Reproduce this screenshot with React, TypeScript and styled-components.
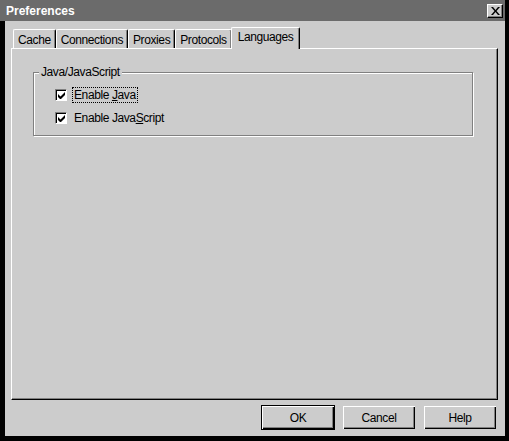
import React from 'react'
import styled, { createGlobalStyle } from 'styled-components'

const Global = createGlobalStyle`
  html, body { margin: 0; padding: 0; background: #000; }
  body { font-family: "Liberation Sans", Arial, sans-serif; font-size: 12px; letter-spacing: -0.4px; }
`

const tabs = ['Cache', 'Connections', 'Proxies', 'Protocols', 'Languages']

export default function App() {
  return (
    <>
      <Global />
      <Window>
        <TitleBar>
          <Title>Preferences</Title>
          <CloseButton>
            <svg width="9" height="8" viewBox="0 0 9 8">
              <path d="M0 0h2l2.5 3 2.5-3h2L5.5 4 9 8H7L4.5 5 2 8H0l3.5-4z" fill="#000" />
            </svg>
          </CloseButton>
        </TitleBar>
        <Body>
          <TabRow>
            {tabs.map((t) => (
              <Tab key={t} $active={t === 'Languages'}>
                {t}
              </Tab>
            ))}
          </TabRow>
          <Panel>
            <GroupBox>
              <Legend>Java/JavaScript</Legend>
              <CheckRow>
                <CheckBox>
                  <Check />
                </CheckBox>
                <Label $focused>
                  Enable <u>J</u>ava
                </Label>
              </CheckRow>
              <CheckRow>
                <CheckBox>
                  <Check />
                </CheckBox>
                <Label>
                  Enable Java<u>S</u>cript
                </Label>
              </CheckRow>
            </GroupBox>
          </Panel>
          <ButtonBar>
            <Button $default>OK</Button>
            <Button>Cancel</Button>
            <Button>Help</Button>
          </ButtonBar>
        </Body>
      </Window>
    </>
  )
}

const Check = () => (
  <svg width="7" height="7" viewBox="0 0 7 7">
    <path d="M0 2v3l2 2h1l4-4V0L2.5 4.5z" fill="#000" />
  </svg>
)

const Window = styled.div`
  width: 509px;
  height: 441px;
  box-sizing: border-box;
  border-right: 4px solid #000;
  display: flex;
  flex-direction: column;
  background: #000;
`

const TitleBar = styled.div`
  height: 21px;
  background: #6b6b6b;
  display: flex;
  align-items: center;
  justify-content: space-between;
  padding: 0 2px 0 6px;
`

const Title = styled.span`
  color: #fff;
  font-weight: bold;
  font-size: 12px;
  letter-spacing: 0;
`

const CloseButton = styled.div`
  width: 16px;
  height: 14px;
  box-sizing: border-box;
  background: #cccccc;
  border-top: 1px solid #fff;
  border-left: 1px solid #fff;
  border-right: 1px solid #000;
  border-bottom: 1px solid #000;
  box-shadow: inset -1px -1px #808080;
  display: flex;
  align-items: center;
  justify-content: center;
`

const Body = styled.div`
  flex: 1;
  background: #cccccc;
  margin: 0 0 5px 5px;
  display: flex;
  flex-direction: column;
  padding: 5px 7px 0 6px;
`

const TabRow = styled.div`
  display: flex;
  align-items: flex-end;
  padding-left: 2px;
  height: 22px;
  position: relative;
  z-index: 1;
`

const Tab = styled.div<{ $active?: boolean }>`
  height: ${(p) => (p.$active ? '22px' : '19px')};
  box-sizing: border-box;
  padding: ${(p) => (p.$active ? '0 6px 3px' : '2px 4px 0')};
  margin: ${(p) => (p.$active ? '0 0 -1px -1px' : '0')};
  display: flex;
  align-items: center;
  color: #000;
  background: #cccccc;
  border-top: 1px solid #fff;
  border-left: 1px solid #fff;
  border-right: 1px solid #000;
  border-radius: 2px 2px 0 0;
  box-shadow: inset -1px 0 #808080;
`

const Panel = styled.div`
  height: 352px;
  box-sizing: border-box;
  border-top: 1px solid #fff;
  border-left: 1px solid #fff;
  border-right: 1px solid #000;
  border-bottom: 1px solid #000;
  box-shadow: inset -1px -1px #808080;
  padding: 23px 24px 0 21px;
`

const GroupBox = styled.div`
  position: relative;
  height: 64px;
  box-sizing: border-box;
  border: 1px solid #808080;
  box-shadow: inset 1px 1px #fff, 1px 1px #fff;
  padding: 16px 0 0 21px;
  display: flex;
  flex-direction: column;
  gap: 11px;
`

const Legend = styled.span`
  position: absolute;
  top: -7px;
  left: 5px;
  background: #cccccc;
  padding: 0 2px;
  line-height: 13px;
`

const CheckRow = styled.div`
  display: flex;
  align-items: center;
  height: 12px;
  gap: 5px;
`

const CheckBox = styled.div`
  width: 12px;
  height: 12px;
  box-sizing: border-box;
  background: #fff;
  border-top: 1px solid #808080;
  border-left: 1px solid #808080;
  border-right: 1px solid #fff;
  border-bottom: 1px solid #fff;
  box-shadow: inset 1px 1px #000;
  display: flex;
  align-items: center;
  justify-content: center;
  padding: 1px 0 0 1px;
`

const Label = styled.span<{ $focused?: boolean }>`
  padding: 1px 1px;
  border: 1px dotted ${(p) => (p.$focused ? '#000' : 'transparent')};
  line-height: 12px;
  u { text-underline-offset: 1px; }
`

const ButtonBar = styled.div`
  display: flex;
  justify-content: flex-end;
  gap: 7px;
  padding: 5px 1px 0 0;
`

const Button = styled.div<{ $default?: boolean }>`
  width: 74px;
  height: 25px;
  box-sizing: border-box;
  display: flex;
  align-items: center;
  justify-content: center;
  background: #cccccc;
  color: #000;
  border: 1px solid ${(p) => (p.$default ? '#000' : 'transparent')};
  box-shadow: inset 1px 1px #fff, inset -1px -1px #000, inset -2px -2px #808080;
`
